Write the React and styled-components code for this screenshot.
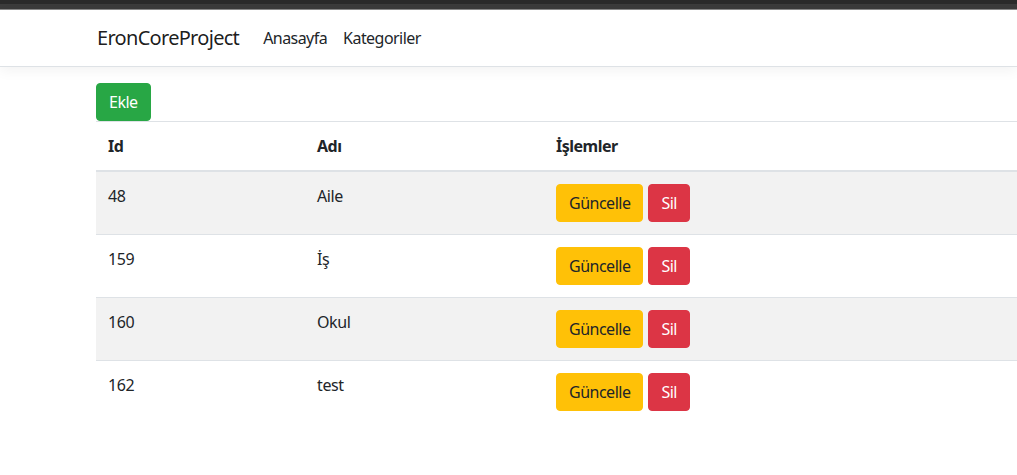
import React from 'react'
import styled, { createGlobalStyle } from 'styled-components'

const GlobalStyle = createGlobalStyle`
  html, body {
    margin: 0;
    padding: 0;
    background: #fff;
    overflow: hidden;
  }
  body {
    font-family: "Noto Sans", "Open Sans", sans-serif;
    font-size: 16px;
    line-height: 1.5;
    color: #212529;
  }
`

const Chrome = styled.div`
  height: 9px;
  background: linear-gradient(to bottom, #2a2a2a 0, #2a2a2a 4px, #3b3b3b 4px);
  border-bottom: 1px solid #8a8a8a;
`

const Navbar = styled.nav`
  height: 56px;
  display: flex;
  align-items: center;
  padding: 0 0 0 97px;
  background: #fff;
  border-bottom: 1px solid #dee2e6;
  box-shadow: 0 4px 12px rgba(0, 0, 0, 0.05);
  margin-bottom: 16px;
`

const Brand = styled.a`
  font-size: 20px;
  color: rgba(0, 0, 0, 0.9);
  margin-right: 16px;
  text-decoration: none;
  letter-spacing: -0.7px;
`

const NavLink = styled.a`
  padding: 8px;
  color: #212529;
  text-decoration: none;
  letter-spacing: -0.55px;
`

const Main = styled.main`
  padding-left: 96px;
`

const Button = styled.button`
  display: inline-block;
  font-family: inherit;
  font-size: 16px;
  line-height: 24px;
  padding: 6px 12px;
  border: 1px solid ${p => p.$bg};
  border-radius: 4px;
  background: ${p => p.$bg};
  color: ${p => p.$fg};
  letter-spacing: -0.5px;
  cursor: pointer;
  & + & {
    margin-left: 5px;
  }
`

const Table = styled.table`
  width: calc(100vw - 96px);
  border-collapse: collapse;
`

const Th = styled.th`
  text-align: left;
  font-weight: 700;
  padding: 12px;
  vertical-align: bottom;
  border-top: 1px solid #dee2e6;
  border-bottom: 2px solid #dee2e6;
  width: ${p => p.$w || 'auto'};
  box-sizing: border-box;
  letter-spacing: -0.5px;
`

const Row = styled.tr`
  background: ${p => (p.$striped ? '#f2f2f2' : '#fff')};
`

const Td = styled.td`
  padding: 12px;
  vertical-align: top;
  border-top: 1px solid #dee2e6;
  letter-spacing: -0.4px;
`

const rows = [
  { id: 48, name: 'Aile' },
  { id: 159, name: 'İş' },
  { id: 160, name: 'Okul' },
  { id: 162, name: 'test' },
]

export default function App() {
  return (
    <>
      <GlobalStyle />
      <Chrome />
      <Navbar>
        <Brand href="#">EronCoreProject</Brand>
        <NavLink href="#">Anasayfa</NavLink>
        <NavLink href="#">Kategoriler</NavLink>
      </Navbar>
      <Main>
        <Button $bg="#28a745" $fg="#fff">Ekle</Button>
        <Table>
          <thead>
            <tr>
              <Th $w="209px">Id</Th>
              <Th $w="239px">Adı</Th>
              <Th>İşlemler</Th>
            </tr>
          </thead>
          <tbody>
            {rows.map((r, i) => (
              <Row key={r.id} $striped={i % 2 === 0}>
                <Td>{r.id}</Td>
                <Td>{r.name}</Td>
                <Td>
                  <Button $bg="#ffc107" $fg="#212529">Güncelle</Button>
                  <Button $bg="#dc3545" $fg="#fff">Sil</Button>
                </Td>
              </Row>
            ))}
          </tbody>
        </Table>
      </Main>
    </>
  )
}
